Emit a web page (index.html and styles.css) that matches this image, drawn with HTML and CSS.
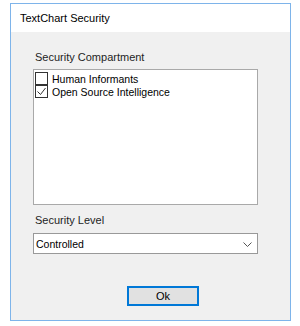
FILE: index.html
```html
<!DOCTYPE html>
<html>
<head>
    <meta charset="UTF-8">
    <title>TextChart Security</title>
    <link rel="stylesheet" href="styles.css">
</head>
<body>
    <div class="window">
        <div class="titlebar">TextChart Security</div>
        <div class="client">
            <div class="label">Security Compartment</div>
            <div class="listbox">
                <div class="item">
                    <span class="check"></span>
                    <span>Human Informants</span>
                </div>
                <div class="item">
                    <span class="check">
                        <svg width="11" height="11" viewBox="0 0 11 11"><path d="M1.5 5.5 L4.5 8.5 L9.5 2" fill="none" stroke="#333" stroke-width="1"/></svg>
                    </span>
                    <span>Open Source Intelligence</span>
                </div>
            </div>
            <div class="label level">Security Level</div>
            <div class="combo">
                <span>Controlled</span>
                <svg class="chevron" width="9" height="5" viewBox="0 0 9 5"><path d="M0.5 0.5 L4.5 4.5 L8.5 0.5" fill="none" stroke="#555" stroke-width="1"/></svg>
            </div>
            <div class="actions">
                <button class="btn">Ok</button>
            </div>
        </div>
    </div>
</body>
</html>
```

FILE: styles.css
```css
body {
    margin: 0;
    background: #fff;
    font-family: "Liberation Sans", Arial, sans-serif;
    color: #000;
}

.window {
    margin: 3px 0 0 10px;
    width: 279px;
    height: 316px;
    border: 1px solid #7eb4ea;
    display: flex;
    flex-direction: column;
}

.titlebar {
    height: 28px;
    background: #fff;
    display: flex;
    align-items: center;
    padding-left: 9px;
    font-size: 11px;
}

.client {
    flex: 1;
    background: #f0f0f0;
    padding: 18px 32px 0 22px;
}

.label {
    font-size: 11px;
    line-height: 15px;
    padding-left: 2px;
    color: #1e1e1e;
    margin-bottom: 4px;
}

.label.level {
    margin-top: 8px;
    margin-bottom: 5px;
}

.listbox {
    height: 131px;
    background: #fff;
    border: 1px solid #a9a9a9;
    padding: 2px 1px 1px 1px;
}

.item {
    display: flex;
    align-items: center;
    height: 13px;
    font-size: 10.5px;
}

.check {
    width: 11px;
    height: 11px;
    border: 1px solid #333;
    background: #fff;
    margin-right: 4px;
    display: flex;
}

.combo {
    height: 19px;
    background: #fff;
    border: 1px solid #999;
    display: flex;
    align-items: center;
    justify-content: space-between;
    padding: 0 5px 0 2px;
    font-size: 10.5px;
}

.chevron {
    margin-top: 1px;
}

.actions {
    margin-top: 32px;
    padding-left: 94px;
}

.btn {
    width: 72px;
    height: 20px;
    background: #e1e1e1;
    border: 1px solid #0078d7;
    box-shadow: inset 0 0 0 1px #0078d7;
    font-family: "Liberation Sans", Arial, sans-serif;
    font-size: 11px;
    padding: 0;
    color: #000;
}
```
